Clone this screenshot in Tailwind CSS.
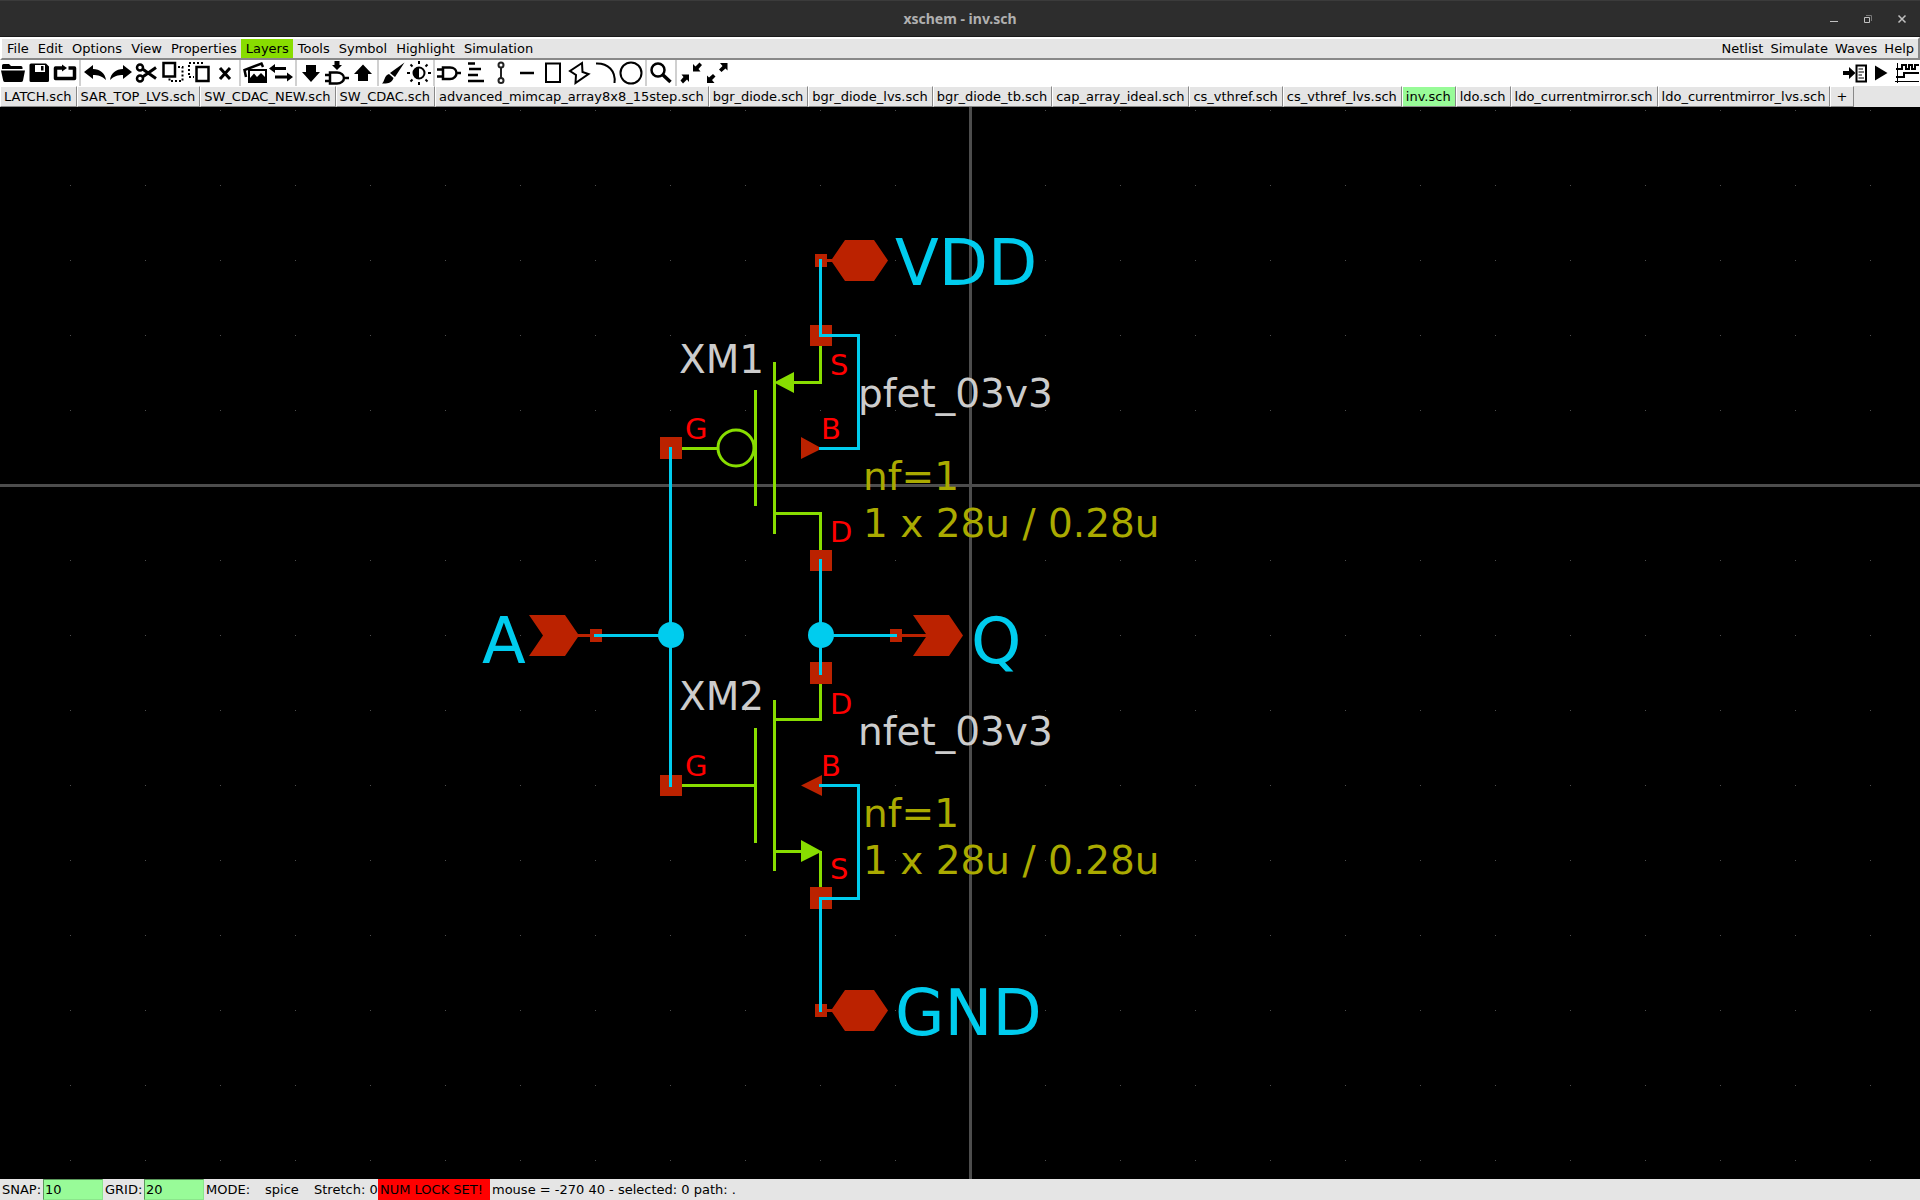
<!DOCTYPE html>
<html lang="en">
<head>
<meta charset="utf-8">
<title>xschem - inv.sch</title>
<script src="https://cdn.jsdelivr.net/npm/@tailwindcss/browser@4"></script>
</head>
<body class="flex h-screen flex-col overflow-hidden bg-black font-['DejaVu_Sans',sans-serif] text-[13px] leading-[19px] text-black">

<header class="grid h-[37px] shrink-0 grid-cols-[1fr_auto_1fr] items-center border-t border-b border-t-[#3b3b3b] border-b-[#1a1a1a] bg-[#2d2d2d]">
  <span></span>
  <h1 class="font-['Noto_Sans',sans-serif] text-sm font-bold text-[#b0b0b0]">xschem - inv.sch</h1>
  <div class="flex justify-end pr-px text-[#c0c0c0] [&>button]:flex [&>button]:w-[34px] [&>button]:justify-center [&_svg]:size-3">
    <button aria-label="Minimize"><svg viewBox="0 0 12 12" fill="none" stroke="currentColor"><path d="M2 8.5H10"/></svg></button>
    <button aria-label="Restore"><svg viewBox="0 0 12 12" fill="none" stroke="currentColor"><path d="M2.5 4.5H7.5V9.500H2.500Z"/><path d="M4 2.500H9.500V8" stroke="#777"/></svg></button>
    <button aria-label="Close"><svg viewBox="0 0 12 12" fill="none" stroke="currentColor" stroke-width="1.500"><path d="M2.500 2.500L9.500 9.500M9.500 2.500L2.500 9.500"/></svg></button>
  </div>
</header>

<nav aria-label="Main menu" class="flex shrink-0 justify-between border-2 border-t-white border-r-[#888] border-b-[#888] border-l-white bg-[#e5e5e5]">
  <div class="flex [&>button]:pr-1 [&>button]:pl-[5px]">
    <button>File</button><button>Edit</button><button>Options</button><button>View</button><button>Properties</button><button class="bg-[#88dd00]">Layers</button><button>Tools</button><button>Symbol</button><button>Highlight</button><button>Simulation</button>
  </div>
  <div class="flex [&>button]:pr-1 [&>button]:pl-[3px]">
    <button>Netlist</button><button>Simulate</button><button>Waves</button><button>Help</button>
  </div>
</nav>

<div role="toolbar" aria-label="Tools" class="flex h-[26px] shrink-0 items-center bg-white [&>button]:w-[26px] [&>button]:shrink-0 [&>button]:p-px [&_svg]:size-6 [&>i]:mx-px [&>i]:h-full [&>i]:w-[2px] [&>i]:shrink-0 [&>i]:bg-[#d0d0d0]">
  <button aria-label="Open"><svg viewBox="0 0 24 24"><path d="M1 8V4.500Q1 3 2.500 3H8L10 5H20Q21.500 5 21.500 6.500V8Z"/><path d="M0 9.500H24L22 19.500Q21.600 21 20 21H4Q2.500 21 2.200 19.500Z"/></svg></button>
  <button aria-label="Save"><svg viewBox="0 0 24 24"><path fill-rule="evenodd" d="M4 2.500H19L22 5.500V19.500Q22 21 20.500 21H4Q2.500 21 2.500 19.500V4Q2.500 2.500 4 2.500ZM8 4V11H18V4ZM14 5H16.500V9.500H14Z"/></svg></button>
  <button aria-label="Reload"><svg viewBox="0 0 24 24"><path d="M9 7H2.500V17.500H21.500V7H15.500" fill="none" stroke="#000" stroke-width="3.500" stroke-linejoin="round"/><path d="M9 3.500L14 7L9 10.500Z"/></svg></button>
  <i></i>
  <button aria-label="Undo"><svg viewBox="0 0 24 24"><path d="M1 11L10 4V8C17 8 22 12 23 19C19 15 15 14 10 14V18Z"/></svg></button>
  <button aria-label="Redo"><svg viewBox="0 0 24 24"><path d="M23 11L14 4V8C7 8 2 12 1 19C5 15 9 14 14 14V18Z"/></svg></button>
  <button aria-label="Cut"><svg viewBox="0 0 24 24" fill="none" stroke="#000" stroke-width="2.500"><circle cx="5" cy="6.500" r="3"/><circle cx="5" cy="17.500" r="3"/><path d="M7.500 8L21 17.500M7.500 16L21 6.500" stroke-width="3"/></svg></button>
  <button aria-label="Copy"><svg viewBox="0 0 24 24" fill="none" stroke="#000"><path d="M2.500 2H14V15.500H2.500Z" stroke-width="2.500"/><path d="M17 6H21.500V20H8.500V17" stroke-width="2" stroke-dasharray="2 2"/></svg></button>
  <button aria-label="Move"><svg viewBox="0 0 24 24" fill="none" stroke="#000"><path d="M9.500 6H21.500V20H9.500Z" stroke-width="2.500"/><path d="M16 2H2V16H7" stroke-width="2" stroke-dasharray="2 2"/></svg></button>
  <button aria-label="Delete"><svg viewBox="0 0 24 24"><path d="M7 7L17 18M17 7L7 18" stroke="#000" stroke-width="3"/></svg></button>
  <i></i>
  <button aria-label="Merge"><svg viewBox="0 0 24 24"><path d="M3 16L1.500 9L18.500 2.500L20 6" fill="none" stroke="#000" stroke-width="2.500"/><path fill-rule="evenodd" d="M5 8H24V22H5ZM7 10V17L11 12.500L14 16L18 12L22 16V10Z"/></svg></button>
  <button aria-label="Swap"><svg viewBox="0 0 24 24"><path d="M0 7.500L6 3V6H17V9H6V12Z"/><path d="M24 16L18 11.500V14.500H6V17.500H18V20.500Z"/></svg></button>
  <i></i>
  <button aria-label="Descend schematic"><svg viewBox="0 0 24 24"><path d="M7 4H17V11H21L12 21L3 11H7Z"/></svg></button>
  <button aria-label="Descend symbol"><svg viewBox="0 0 24 24"><path d="M9.500 0H14.500V4H17L12 9L7 4H9.500Z"/><path d="M5 11.500H12C16 11.500 19 14 19 17S16 22.500 12 22.500H5ZM0 14H5M0 20H5M19 17H24" fill="none" stroke="#000" stroke-width="2.500"/></svg></button>
  <button aria-label="Ascend"><svg viewBox="0 0 24 24"><path d="M7 20V13H3L12 3.500L21 13H17V20Z"/></svg></button>
  <i></i>
  <button aria-label="Brush"><svg viewBox="0 0 24 24"><path d="M23.500 1.500L14 16L9 12Z"/><path d="M8 13L12.500 17C11 22 6 23 1 22.500C4 20 3 14.500 8 13Z"/></svg></button>
  <button aria-label="Toggle colors"><svg viewBox="0 0 24 24"><circle cx="12" cy="12" r="5.500" fill="none" stroke="#000" stroke-width="2"/><path d="M12 6.500A5.500 5.500 0 0 0 12 17.500Z"/><path d="M12 0V3M12 21V24M0 12H3M21 12H24M3.500 3.500L5.500 5.500M18.500 18.500L20.500 20.500M3.500 20.500L5.500 18.500M18.500 5.500L20.500 3.500" stroke="#000" stroke-width="2"/></svg></button>
  <i></i>
  <button aria-label="Insert symbol"><svg viewBox="0 0 24 24" fill="none" stroke="#000" stroke-width="2.500"><path d="M6 6.500H13C17 6.500 19.500 9 19.500 12S17 18 13 18H6ZM0 8.500H6M0 15.500H6M19.500 12H24"/></svg></button>
  <button aria-label="Insert text"><svg viewBox="0 0 24 24" fill="none" stroke="#000" stroke-width="2.500"><path d="M5 2.500H12M6 8H18M5 14H15M5 20H21"/></svg></button>
  <button aria-label="Insert wire"><svg viewBox="0 0 24 24" fill="none" stroke="#222" stroke-width="2"><circle cx="12" cy="4" r="2.500"/><circle cx="12" cy="19.500" r="2.500"/><path d="M12 6.500V17"/></svg></button>
  <button aria-label="Insert line"><svg viewBox="0 0 24 24"><path d="M5 12H19" stroke="#000" stroke-width="2.500"/></svg></button>
  <button aria-label="Insert rectangle"><svg viewBox="0 0 24 24"><path d="M5 2.500H19V21H5Z" fill="none" stroke="#000" stroke-width="2"/></svg></button>
  <button aria-label="Insert polygon"><svg viewBox="0 0 24 24"><path d="M15 2L3 10L9 14L8.500 22L21.500 13L15.500 11Z" fill="none" stroke="#000" stroke-width="2"/></svg></button>
  <button aria-label="Insert arc"><svg viewBox="0 0 24 24"><path d="M3 2.500C15 2 23 10 21.500 22" fill="none" stroke="#000" stroke-width="2"/></svg></button>
  <button aria-label="Insert circle"><svg viewBox="0 0 24 24"><circle cx="12" cy="12" r="10.500" fill="none" stroke="#000" stroke-width="2"/></svg></button>
  <i></i>
  <button aria-label="Zoom box"><svg viewBox="0 0 24 24" fill="none" stroke="#000"><circle cx="9" cy="9" r="6.500" stroke-width="2.500"/><path d="M13.500 13.500L21.500 21" stroke-width="3.500"/></svg></button>
  <i></i>
  <button aria-label="Zoom in"><svg viewBox="0 0 24 24"><path d="M14 3V10.500H21.500L19.500 8L23 4L20.500 1.500L16.500 5.500ZM10 21V13.500H2.500L4.500 16L1.500 19.500L4 22.500L8 18.500Z"/></svg></button>
  <button aria-label="Zoom full"><svg viewBox="0 0 24 24"><path d="M22.500 2V9.500L20.500 7.500L16.500 11L14 8.500L17.500 5L15 2ZM2 22V14.500L4 16.500L8 13L10.500 15.500L7 19L9.500 22Z"/></svg></button>
  <span class="grow"></span>
  <button aria-label="Netlist"><svg viewBox="0 0 24 24"><path d="M0 10H6V6L12.500 12L6 18V14H0Z"/><path d="M13.500 4.500H23V20.500H13.500Z" fill="none" stroke="#000" stroke-width="2"/><path d="M15.500 8H20M15.500 11H21M15.500 14H19M15.500 17H21" stroke="#000"/></svg></button>
  <button aria-label="Simulate"><svg viewBox="0 0 24 24"><path d="M6 4.500L18.500 12L6 19.500Z"/></svg></button>
  <button aria-label="Waves"><svg viewBox="0 0 24 24" fill="none" stroke="#000"><path d="M2.500 2V22M0 20.500H24"/><path d="M1 8H7V4H11V8H14V4H17V8H20V4H24M1 16H9V12H24" stroke-width="2"/></svg></button>
</div>

<div role="tablist" aria-label="Open schematics" class="flex h-[21px] shrink-0 bg-[#e5e5e5] [&>button]:shrink-0 [&>button]:border [&>button]:border-t-white [&>button]:border-r-[#888] [&>button]:border-b-[#888] [&>button]:border-l-white [&>button]:pr-1 [&>button]:pb-[2px] [&>button]:pl-[3px]">
  <button role="tab">LATCH.sch</button><button role="tab">SAR_TOP_LVS.sch</button><button role="tab">SW_CDAC_NEW.sch</button><button role="tab">SW_CDAC.sch</button><button role="tab">advanced_mimcap_array8x8_15step.sch</button><button role="tab">bgr_diode.sch</button><button role="tab">bgr_diode_lvs.sch</button><button role="tab">bgr_diode_tb.sch</button><button role="tab">cap_array_ideal.sch</button><button role="tab">cs_vthref.sch</button><button role="tab">cs_vthref_lvs.sch</button><button role="tab" aria-selected="true" class="bg-[#98fb98]">inv.sch</button><button role="tab">ldo.sch</button><button role="tab">ldo_currentmirror.sch</button><button role="tab">ldo_currentmirror_lvs.sch</button><button aria-label="New tab" class="w-6">+</button>
</div>

<main class="min-h-0 flex-1 bg-black">
<svg class="block h-full w-full" font-family="DejaVu Sans, sans-serif" fill="none" role="img" aria-label="Inverter schematic">
  <defs>
    <pattern id="grid" x="70" y="3" width="75" height="75" patternUnits="userSpaceOnUse"><rect width="1" height="1" fill="#4d4d4d"/></pattern>
  </defs>
  <rect width="100%" height="100%" fill="url(#grid)"/>
  <g fill="#4d4d4d">
    <rect x="969" width="3" height="100%"/>
    <rect y="377" width="100%" height="3"/>
  </g>
  <g transform="translate(0 -107)">
    <!-- transistors -->
    <g stroke="#88dd00" stroke-width="3">
      <path d="M820.500 346V382.500H790M774.500 362V534M774.500 513.500H820.500V551M755.500 390V506M682 448.500H717"/>
      <circle cx="736" cy="448" r="18"/>
      <path d="M820.500 683V719.500H774.500M774.500 700V871M755.500 728V843M682 785.500H755.500M774.500 851.500H803M820.500 851V888"/>
    </g>
    <path d="M774 382.500L794 372V393ZM822 851.500L801 840V862Z" fill="#88dd00"/>
    <!-- pins and ports -->
    <g fill="#bb2200">
      <path d="M810 325h22v21h-22zM810 550h22v21h-22zM660 437h22v22h-22zM810 662h22v22h-22zM660 775h22v21h-22zM810 887h22v22h-22z"/>
      <path d="M815 254h12v13h-12zM815 1004h12v13h-12zM590 629h12v13h-12zM890 629h12v13h-12z"/>
      <path d="M831 260.500L845 240H874L888 260.500L874 281H845ZM831 1010.500L845 990H874L888 1010.500L874 1031H845Z"/>
      <path d="M529 615H565L579 635.500L565 656H529L543 635.500ZM913 615H949L963 635.500L949 656H913L927 635.500Z"/>
      <path d="M801 437L822 448.500L801 459ZM822 775L801 785.500L822 796Z"/>
      <path d="M827 259h6v3h-6zM827 1009h6v3h-6zM577 634h14v3h-14zM902 634h26v3h-26z"/>
    </g>
    <!-- nets -->
    <path d="M820.500 259V335.500H858.500V448.500H819M670.500 447V787M594 635.500H670.500M820.500 559V675M819 635.500H897M819 785.500H858.500V898.500H820.500V1012" stroke="#00ccee" stroke-width="3"/>
    <g fill="#00ccee">
      <circle cx="671" cy="635" r="13"/>
      <circle cx="821" cy="635" r="13"/>
    </g>
    <!-- labels -->
    <g fill="#00ccee" font-size="64">
      <text x="895" y="285">VDD</text>
      <text x="482" y="663">A</text>
      <text x="971" y="663">Q</text>
      <text x="895" y="1035">GND</text>
    </g>
    <g fill="#cccccc" font-size="39">
      <text x="679" y="373">XM1</text>
      <text x="858" y="407">pfet_03v3</text>
      <text x="679" y="710">XM2</text>
      <text x="858" y="745">nfet_03v3</text>
    </g>
    <g fill="#aaaa00" font-size="39">
      <text x="863" y="490">nf=1</text>
      <text x="863" y="537">1 x 28u / 0.28u</text>
      <text x="863" y="827">nf=1</text>
      <text x="863" y="874">1 x 28u / 0.28u</text>
    </g>
    <g fill="#ff0000" font-size="29">
      <text x="830" y="375">S</text>
      <text x="821" y="439">B</text>
      <text x="685" y="439">G</text>
      <text x="830" y="542">D</text>
      <text x="830" y="714">D</text>
      <text x="821" y="776">B</text>
      <text x="685" y="776">G</text>
      <text x="830" y="879">S</text>
    </g>
  </g>
</svg>
</main>

<footer class="flex h-[21px] shrink-0 items-center bg-[#e5e5e5] pl-[2px] leading-[21px] whitespace-pre [&>input]:mr-[2px] [&>input]:h-full [&>input]:w-[60px] [&>input]:border [&>input]:border-t-[#5b975b] [&>input]:border-r-[#8be58b] [&>input]:border-b-[#8be58b] [&>input]:border-l-[#5b975b] [&>input]:bg-[#98fb98] [&>input]:pl-px">
  <label for="snap" class="w-[41px]">SNAP:</label><input id="snap" value="10">
  <label for="gridsize" class="w-[39px]">GRID:</label><input id="gridsize" value="20">
  <span class="w-[59px]">MODE:</span>
  <span class="w-[49px]">spice</span>
  <span class="w-16">Stretch: 0</span>
  <strong class="w-28 bg-[#ff0000] pl-[2px] font-normal">NUM LOCK SET!</strong>
  <span class="pl-[2px]">mouse = -270 40 - selected: 0 path: .</span>
</footer>
</body>
</html>
